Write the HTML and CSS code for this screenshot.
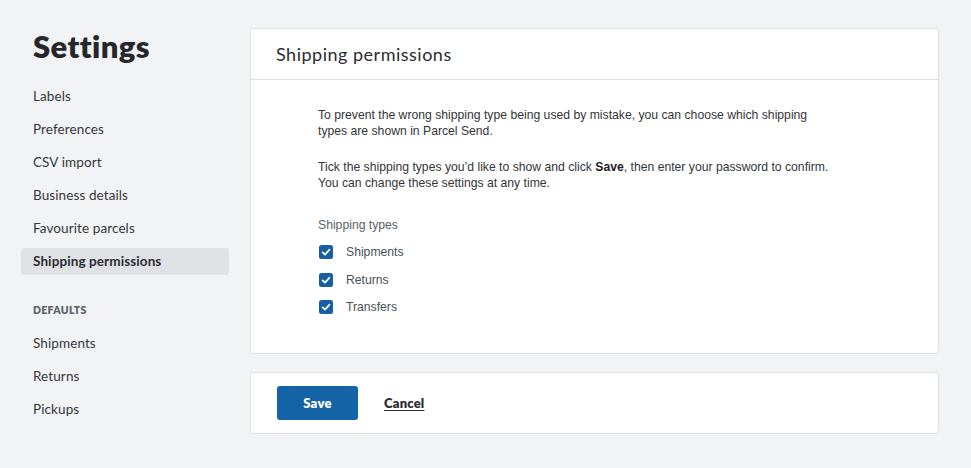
FILE: index.html
```html
<!DOCTYPE html>
<html lang="en">
<head>
<meta charset="utf-8">
<title>Settings</title>
<link rel="stylesheet" href="styles.css">
</head>
<body>
<div class="page">
  <aside class="sidebar">
    <h1 class="title">Settings</h1>
    <nav class="nav">
      <a class="nav-item">Labels</a>
      <a class="nav-item">Preferences</a>
      <a class="nav-item">CSV import</a>
      <a class="nav-item">Business details</a>
      <a class="nav-item">Favourite parcels</a>
      <a class="nav-item active">Shipping permissions</a>
    </nav>
    <div class="nav-heading">DEFAULTS</div>
    <nav class="nav">
      <a class="nav-item">Shipments</a>
      <a class="nav-item">Returns</a>
      <a class="nav-item">Pickups</a>
    </nav>
  </aside>
  <main class="main">
    <section class="card">
      <header class="card-header">
        <h2 class="card-title">Shipping permissions</h2>
      </header>
      <div class="card-body">
        <p class="para">To prevent the wrong shipping type being used by mistake, you can choose which shipping types are shown in Parcel Send.</p>
        <p class="para">Tick the shipping types you’d like to show and click <strong class="strong">Save</strong>, then enter your password to confirm. You can change these settings at any time.</p>
        <div class="field-label">Shipping types</div>
        <ul class="checks">
          <li class="check-row">
            <svg class="checkbox" viewBox="0 0 14 14" width="14" height="14"><rect x="0" y="0" width="14" height="14" rx="2.5" fill="#175fa2"/><path d="M3.6 7.3 L6 9.6 L10.5 4.6" fill="none" stroke="#fff" stroke-width="1.7" stroke-linecap="round" stroke-linejoin="round"/></svg>
            <span>Shipments</span>
          </li>
          <li class="check-row">
            <svg class="checkbox" viewBox="0 0 14 14" width="14" height="14"><rect x="0" y="0" width="14" height="14" rx="2.5" fill="#175fa2"/><path d="M3.6 7.3 L6 9.6 L10.5 4.6" fill="none" stroke="#fff" stroke-width="1.7" stroke-linecap="round" stroke-linejoin="round"/></svg>
            <span>Returns</span>
          </li>
          <li class="check-row">
            <svg class="checkbox" viewBox="0 0 14 14" width="14" height="14"><rect x="0" y="0" width="14" height="14" rx="2.5" fill="#175fa2"/><path d="M3.6 7.3 L6 9.6 L10.5 4.6" fill="none" stroke="#fff" stroke-width="1.7" stroke-linecap="round" stroke-linejoin="round"/></svg>
            <span>Transfers</span>
          </li>
        </ul>
      </div>
    </section>
    <section class="card actions">
      <button class="btn-primary" type="button">Save</button>
      <a class="btn-link">Cancel</a>
    </section>
  </main>
</div>
</body>
</html>
```

FILE: styles.css
```css
* { box-sizing: border-box; }
html, body { margin: 0; padding: 0; }
body {
  background: #f2f3f5;
  color: #2b2d31;
  font-family: Lato, "Noto Sans", "DejaVu Sans", sans-serif;
  width: 971px;
  height: 468px;
  overflow: hidden;
}
.page {
  display: grid;
  grid-template-columns: 208px 1fr;
  column-gap: 21px;
  padding: 28px 32px 0 21px;
}
.sidebar { display: flex; flex-direction: column; }
.title {
  margin: 0 0 0 12px;
  font-size: 31px;
  line-height: 36px;
  font-weight: 800;
  letter-spacing: 0.4px;
  color: #25272b;
  height: 55px;
}
.nav { display: flex; flex-direction: column; }
.nav-item {
  display: block;
  padding: 6px 12px;
  line-height: 15px;
  font-size: 13.5px;
  color: #34373c;
  margin-bottom: 6px;
  border-radius: 3px;
  letter-spacing: 0.1px;
}
.nav-item.active {
  background: #dfe1e4;
  font-weight: 700;
  color: #2b2d31;
}
.nav-heading {
  margin: 22px 0 13px;
  padding: 0 12px;
  line-height: 14px;
  font-size: 10.5px;
  font-weight: 800;
  color: #5d6269;
  letter-spacing: 0.3px;
}
.main { display: flex; flex-direction: column; gap: 18px; }
.card {
  background: #fff;
  border: 1px solid #dcdfe3;
  border-radius: 3px;
}
.card-header {
  height: 51px;
  border-bottom: 1px solid #dcdfe3;
  display: flex;
  align-items: center;
  padding: 0 25px;
}
.card-title {
  margin: 0;
  font-size: 18px;
  font-weight: 400;
  color: #2b2d31;
  letter-spacing: 0.5px;
}
.card-body {
  padding: 27px 67px 36px;
  font-family: "Liberation Sans", Arial, sans-serif;
  font-size: 12.2px;
  color: #333538;
}
.para {
  margin: 0 0 20px;
  line-height: 16px;
  max-width: 520px;
}
.strong { font-weight: 700; color: #222; }
.field-label {
  margin-top: 26px;
  line-height: 16px;
  color: #5a5f66;
}
.checks {
  list-style: none;
  margin: 9px 0 0;
  padding: 0;
  display: flex;
  flex-direction: column;
  gap: 7.5px;
}
.check-row {
  display: flex;
  align-items: center;
  height: 20px;
  color: #4a4f56;
}
.checkbox { flex: none; margin-left: 1px; margin-right: 13px; }
.actions {
  display: flex;
  align-items: center;
  padding: 13px 26px;
  gap: 26px;
}
.btn-primary {
  width: 81px;
  height: 34px;
  border: none;
  border-radius: 3px;
  background: #1563a7;
  color: #fff;
  font-family: Lato, "Noto Sans", sans-serif;
  font-size: 13px;
  font-weight: 800;
  letter-spacing: 0.3px;
}
.btn-link {
  font-size: 13px;
  font-weight: 800;
  color: #2b2d31;
  text-decoration: underline;
  text-underline-offset: 2px;
  letter-spacing: 0.2px;
}
```
